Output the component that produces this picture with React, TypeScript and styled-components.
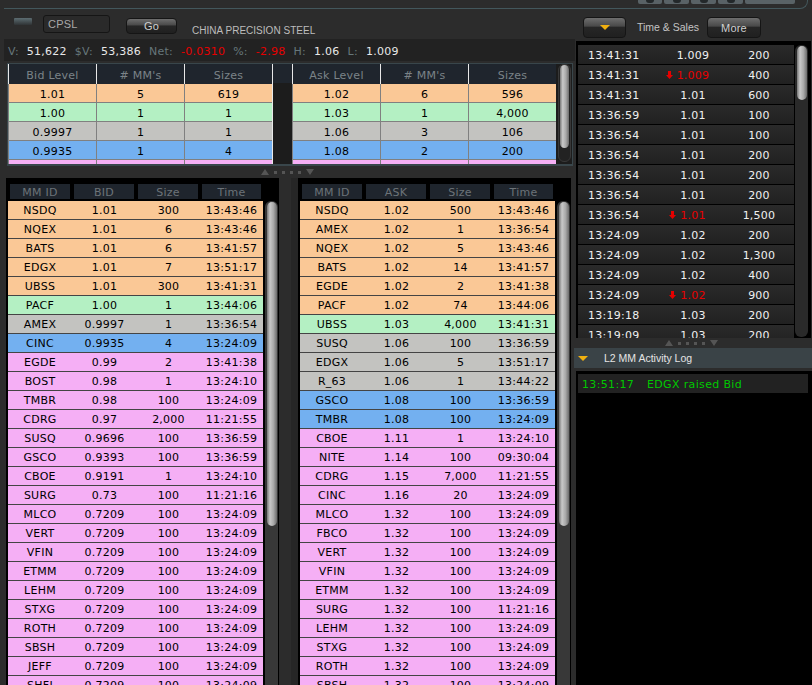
import React from "react";
import styled, { createGlobalStyle } from "styled-components";

const Global = createGlobalStyle`
  html, body { margin: 0; padding: 0; background: #2c2c2c; }
  #root { width: 812px; height: 685px; overflow: hidden; }
`;

type Tone = "o" | "g" | "s" | "b" | "p";
const tones: Record<Tone, string> = { o: "#fac896", g: "#b4f0c3", s: "#c3c3c0", b: "#73b0f0", p: "#f5aff5" };

const Page = styled.div`
  width: 812px; height: 685px; overflow: hidden; display: flex; flex-direction: column;
  background: #2c2c2c; font-family: "DejaVu Sans", sans-serif; font-size: 11px; letter-spacing: .25px;
`;
const TopStrip = styled.div`
  height: 8px; flex: none; margin: 0 4px; border-bottom: 1px solid #43575c; border-right: 1px solid #43575c;
  border-bottom-right-radius: 8px; display: flex; justify-content: flex-end; gap: 2px; padding-right: 12px; box-sizing: content-box;
`;
const TopTab = styled.div<{ $w: number }>`
  width: ${p => p.$w}px; height: 4px; background: #596266; border-radius: 0 0 2px 2px; display: flex; justify-content: center;
`;
const TopGlyph = styled.div`width: 8px; height: 3px; background: #23282a; border-radius: 0 0 3px 3px;`;
const Body = styled.div`flex: 1; min-height: 0; display: flex;`;
const LeftCol = styled.div`width: 575px; flex: none; display: flex; flex-direction: column; min-height: 0;`;
const RightCol = styled.div`flex: 1; min-width: 0; display: flex; flex-direction: column; min-height: 0;`;

const Header = styled.div`height: 30px; flex: none; display: flex; align-items: flex-start; padding: 6px 0 0 14px; box-sizing: border-box;`;
const BarButton = styled.div`width: 18px; height: 7px; margin-top: 3px; border-radius: 1px; background: linear-gradient(#5d6d72, #2f3335);`;
const SymbolBox = styled.div`
  width: 67px; height: 18px; margin-left: 11px; box-sizing: border-box; background: #2a2a2a; border: 1px solid #151515; border-radius: 3px;
  color: #a8a8a8; line-height: 16px; padding-left: 4px; font-family: "Liberation Sans", sans-serif;
`;
const Button = styled.div<{ $w: number }>`
  width: ${p => p.$w}px; box-sizing: border-box; border: 1px solid #151515; border-radius: 4px; display: flex; align-items: center; justify-content: center;
  background: linear-gradient(#6e6e6e 0%, #4a4a4a 42%, #262626 50%, #202020 100%); color: #cfcfcf;
  font-family: "Liberation Sans", sans-serif; letter-spacing: .2px;
`;
const GoButton = styled(Button)`height: 16px; margin: 3px 0 0 16px;`;
const Title = styled.div`margin: 9px 0 0 15px; color: #bdbdbd; font-family: "Liberation Sans", sans-serif; font-size: 10px; line-height: 14px; letter-spacing: .02px;`;

const Stats = styled.div`
  height: 22px; flex: none; margin-left: 4px; background: #222; display: flex; align-items: center; padding: 2px 0 0 4px; white-space: nowrap; box-sizing: border-box;
`;
const StatLabel = styled.span`color: #66777b; margin-right: 8px; margin-left: 8px; &:first-child { margin-left: 0; }`;
const StatValue = styled.span<{ $red?: boolean }>`color: ${p => (p.$red ? "#e60000" : "#e8e8e8")};`;

const LevelFrame = styled.div`
  height: 103px; flex: none; margin: 2px 2px 0 7px; box-sizing: border-box; border: 1px solid #39464b; border-bottom-width: 2px; display: flex; overflow: hidden;
  background: #1c1c1c;
`;
const LevelSide = styled.div<{ $last?: boolean }>`
  display: grid; grid-template-columns: repeat(3, 88px); grid-auto-rows: 19px; align-content: start; flex: none;
  border-right: ${p => (p.$last ? "none" : "1px solid transparent")};
`;
const LevelHead = styled.div`
  height: 20px; margin-bottom: -1px; background: #1f252d; color: #7b8388; border-left: 1px solid #e8e8e8; text-align: center; line-height: 23px; box-sizing: border-box;
`;
const LevelCell = styled.div<{ $tone: Tone }>`
  background: ${p => tones[p.$tone]}; color: #000; text-align: center; line-height: 21px; box-sizing: border-box; margin-top: 1px; height: 19px;
  border-left: 1px solid #808080; border-bottom: 1px solid #808080;
`;
const LevelGap = styled.div`width: 19px; flex: none; background: linear-gradient(#1f252d 19px, #1c1c1c 19px); border-left: 1px solid #e8e8e8; box-sizing: content-box; margin-left: -1px;`;

const Track = styled.div<{ $w?: number }>`
  width: ${p => p.$w ?? 13}px; flex: none; background: #383838; border-radius: 6px 6px 0 0; padding: 2px 1px 0 2px; box-sizing: border-box;
`;
const LevelTrack = styled(Track)`margin-left: 2px; border-radius: 6px; height: 98px; background: #222; border: 1px solid #383838; padding: 0 1px;`;
const Thumb = styled.div<{ $h: number }>`
  height: ${p => p.$h}px; border-radius: 5px;
  background: linear-gradient(90deg, #777 0%, #c9c9c9 30%, #a9a9a9 65%, #6c6c6c 100%);
`;

const Splitter = styled.div<{ $h: number; $ml: number }>`
  height: ${p => p.$h}px; flex: none; display: flex; align-items: center; gap: 5px; padding-left: ${p => p.$ml}px; box-sizing: border-box;
`;
const Tri = styled.div<{ $down?: boolean }>`
  width: 0; height: 0; border-left: 4px solid transparent; border-right: 4px solid transparent;
  ${p => (p.$down ? "border-top: 6px solid #555;" : "border-bottom: 6px solid #555;")}
`;
const Dot = styled.div`width: 3px; height: 3px; background: #555;`;

const Panels = styled.div`flex: 1; min-height: 0; display: flex; justify-content: space-between; padding: 0 4px 0 6px;`;
const Panel = styled.div`
  width: 273px; flex: none; background: #000; padding: 6px 0 0 2px; box-sizing: border-box; overflow: hidden; display: flex; flex-direction: column; border-right: 1px solid #000;
  & + & { box-shadow: -7px 0 0 #262626; }
`;
const HeadRow = styled.div`display: flex; gap: 4px; padding-left: 2px; flex: none; height: 17px;`;
const HeadCell = styled.div<{ $w: number }>`
  width: ${p => p.$w}px; height: 15px; background: #1f252d; color: #6c7378; text-align: center; line-height: 17px;
`;
const PanelBody = styled.div`display: flex; flex: 1; min-height: 0;`;
const Rows = styled.div`width: 255px; flex: none; display: flex; flex-direction: column;`;
const MMRow = styled.div<{ $tone: Tone }>`
  height: 19px; flex: none; box-sizing: border-box; border-bottom: 1px solid #444; background: ${p => tones[p.$tone]}; color: #000;
  display: grid; grid-template-columns: 64px 65px 63px 63px; line-height: 20px; text-align: center;
`;
const PanelTrack = styled(Track)`margin-left: 2px; width: 13px; padding-top: 1px;`;

const RightHeader = styled.div`height: 32px; flex: none; display: flex; align-items: flex-start; padding: 8px 0 0 8px; box-sizing: border-box;`;
const ArrowButton = styled(Button)`height: 21px;`;
const MoreButton = styled(Button)`height: 21px; margin-left: 11px;`;
const SmallCaption = styled.div`margin: 4px 0 0 11px; color: #c4c4c4; font-family: "Liberation Sans", sans-serif; font-size: 10.5px; line-height: 13px; width: 59px; white-space: nowrap; letter-spacing: 0;`;
const YellowTri = styled.div`
  width: 0; height: 0; border-left: 5px solid transparent; border-right: 5px solid transparent; border-top: 5px solid #f0b010;
`;
const TSPanel = styled.div`
  height: 297px; flex: none; margin: 0 1px; background: #000; display: flex; padding: 4px 0 0 2px; box-sizing: border-box; overflow: hidden;
`;
const TSRows = styled.div`width: 216px; flex: none; display: flex; flex-direction: column;`;
const TSRow = styled.div`
  height: 20px; flex: none; box-sizing: border-box; border-bottom: 1px solid #000; background: linear-gradient(#2a2a2a, #212121); color: #f0f0f0;
  display: grid; grid-template-columns: 80px 70px 62px; line-height: 21px;
`;
const TSTime = styled.div`padding-left: 10px;`;
const TSPrice = styled.div<{ $red?: boolean }>`text-align: center; color: ${p => (p.$red ? "#e60000" : "inherit")};`;
const PriceInner = styled.span`position: relative;`;
const DownMark = styled.svg`position: absolute; left: -11px; top: 2px;`;
const TSSize = styled.div`text-align: center;`;
const TSTrack = styled(Track)`margin-left: 1px; background: #2a2a2a; height: 292px; border-radius: 6px; padding: 1px 1px 0 2px;`;

const LogHead = styled.div`
  height: 20px; flex: none; margin-left: -1px; background: #3a4347; display: flex; align-items: center; padding-left: 4px; color: #e4e4e4;
  font-family: "Liberation Sans", sans-serif; font-size: 10.5px; letter-spacing: 0;
`;
const LogTitle = styled.span`margin-left: 16px;`;
const LogPanel = styled.div`flex: 1; min-height: 0; margin: 3px 0 0 1px; background: #000; padding: 3px 4px 0 2px;`;
const LogRow = styled.div`height: 19px; background: #222; color: #00c800; line-height: 21px; padding-left: 4px; display: flex; letter-spacing: .35px;`;
const LogTime = styled.span`width: 65px;`;

const levelBid: [string, string, string, Tone][] = [
  ["1.01", "5", "619", "o"], ["1.00", "1", "1", "g"], ["0.9997", "1", "1", "s"], ["0.9935", "1", "4", "b"], ["", "", "", "p"],
];
const levelAsk: [string, string, string, Tone][] = [
  ["1.02", "6", "596", "o"], ["1.03", "1", "4,000", "g"], ["1.06", "3", "106", "s"], ["1.08", "2", "200", "b"], ["", "", "", "p"],
];
type R = [string, string, string, string, Tone];
const bids: R[] = [
  ["NSDQ", "1.01", "300", "13:43:46", "o"], ["NQEX", "1.01", "6", "13:43:46", "o"], ["BATS", "1.01", "6", "13:41:57", "o"],
  ["EDGX", "1.01", "7", "13:51:17", "o"], ["UBSS", "1.01", "300", "13:41:31", "o"], ["PACF", "1.00", "1", "13:44:06", "g"],
  ["AMEX", "0.9997", "1", "13:36:54", "s"], ["CINC", "0.9935", "4", "13:24:09", "b"], ["EGDE", "0.99", "2", "13:41:38", "p"],
  ["BOST", "0.98", "1", "13:24:10", "p"], ["TMBR", "0.98", "100", "13:24:09", "p"], ["CDRG", "0.97", "2,000", "11:21:55", "p"],
  ["SUSQ", "0.9696", "100", "13:36:59", "p"], ["GSCO", "0.9393", "100", "13:36:59", "p"], ["CBOE", "0.9191", "1", "13:24:10", "p"],
  ["SURG", "0.73", "100", "11:21:16", "p"], ["MLCO", "0.7209", "100", "13:24:09", "p"], ["VERT", "0.7209", "100", "13:24:09", "p"],
  ["VFIN", "0.7209", "100", "13:24:09", "p"], ["ETMM", "0.7209", "100", "13:24:09", "p"], ["LEHM", "0.7209", "100", "13:24:09", "p"],
  ["STXG", "0.7209", "100", "13:24:09", "p"], ["ROTH", "0.7209", "100", "13:24:09", "p"], ["SBSH", "0.7209", "100", "13:24:09", "p"],
  ["JEFF", "0.7209", "100", "13:24:09", "p"], ["SHFI", "0.7209", "100", "13:24:09", "p"],
];
const asks: R[] = [
  ["NSDQ", "1.02", "500", "13:43:46", "o"], ["AMEX", "1.02", "1", "13:36:54", "o"], ["NQEX", "1.02", "5", "13:43:46", "o"],
  ["BATS", "1.02", "14", "13:41:57", "o"], ["EGDE", "1.02", "2", "13:41:38", "o"], ["PACF", "1.02", "74", "13:44:06", "o"],
  ["UBSS", "1.03", "4,000", "13:41:31", "g"], ["SUSQ", "1.06", "100", "13:36:59", "s"], ["EDGX", "1.06", "5", "13:51:17", "s"],
  ["R_63", "1.06", "1", "13:44:22", "s"], ["GSCO", "1.08", "100", "13:36:59", "b"], ["TMBR", "1.08", "100", "13:24:09", "b"],
  ["CBOE", "1.11", "1", "13:24:10", "p"], ["NITE", "1.14", "100", "09:30:04", "p"], ["CDRG", "1.15", "7,000", "11:21:55", "p"],
  ["CINC", "1.16", "20", "13:24:09", "p"], ["MLCO", "1.32", "100", "13:24:09", "p"], ["FBCO", "1.32", "100", "13:24:09", "p"],
  ["VERT", "1.32", "100", "13:24:09", "p"], ["VFIN", "1.32", "100", "13:24:09", "p"], ["ETMM", "1.32", "100", "13:24:09", "p"],
  ["SURG", "1.32", "100", "11:21:16", "p"], ["LEHM", "1.32", "100", "13:24:09", "p"], ["STXG", "1.32", "100", "13:24:09", "p"],
  ["ROTH", "1.32", "100", "13:24:09", "p"], ["SBSH", "1.32", "100", "13:24:09", "p"],
];
const sales: [string, string, string, boolean][] = [
  ["13:41:31", "1.009", "200", false], ["13:41:31", "1.009", "400", true], ["13:41:31", "1.01", "600", false],
  ["13:36:59", "1.01", "100", false], ["13:36:54", "1.01", "100", false], ["13:36:54", "1.01", "200", false],
  ["13:36:54", "1.01", "200", false], ["13:36:54", "1.01", "200", false], ["13:36:54", "1.01", "1,500", true],
  ["13:24:09", "1.02", "200", false], ["13:24:09", "1.02", "1,300", false], ["13:24:09", "1.02", "400", false],
  ["13:24:09", "1.02", "900", true], ["13:19:18", "1.03", "200", false], ["13:19:09", "1.03", "200", false],
];

const Handle = () => (
  <>
    <Tri /><Dot /><Dot /><Dot /><Dot /><Tri $down />
  </>
);

function Level({ title, rows, last }: { title: string; rows: [string, string, string, Tone][]; last?: boolean }) {
  return (
    <LevelSide $last={last}>
      {[title, "# MM's", "Sizes"].map(h => <LevelHead key={h}>{h}</LevelHead>)}
      {rows.map((r, i) => [0, 1, 2].map(c => <LevelCell key={`${i}-${c}`} $tone={r[3]}>{r[c as 0 | 1 | 2]}</LevelCell>))}
    </LevelSide>
  );
}

function MM({ second, rows }: { second: string; rows: R[] }) {
  return (
    <Panel>
      <HeadRow>
        <HeadCell $w={60}>MM ID</HeadCell>
        <HeadCell $w={60}>{second}</HeadCell>
        <HeadCell $w={60}>Size</HeadCell>
        <HeadCell $w={59}>Time</HeadCell>
      </HeadRow>
      <PanelBody>
        <Rows>
          {rows.map((r, i) => (
            <MMRow key={i} $tone={r[4]}>
              <div>{r[0]}</div><div>{r[1]}</div><div>{r[2]}</div><div>{r[3]}</div>
            </MMRow>
          ))}
        </Rows>
        <PanelTrack><Thumb $h={324} /></PanelTrack>
      </PanelBody>
    </Panel>
  );
}

export default function App() {
  return (
    <Page>
      <Global />
      <TopStrip>
        <TopTab $w={24}><TopGlyph /></TopTab>
        <TopTab $w={25}><TopGlyph /></TopTab>
        <TopTab $w={25}><TopGlyph /></TopTab>
        <TopTab $w={25}><TopGlyph /></TopTab>
        <TopTab $w={50} />
      </TopStrip>
      <Body>
        <LeftCol>
          <Header>
            <BarButton />
            <SymbolBox>CPSL</SymbolBox>
            <GoButton $w={51}>Go</GoButton>
            <Title>CHINA PRECISION STEEL</Title>
          </Header>
          <Stats>
            <StatLabel>V:</StatLabel><StatValue>51,622</StatValue>
            <StatLabel>$V:</StatLabel><StatValue>53,386</StatValue>
            <StatLabel>Net:</StatLabel><StatValue $red>-0.0310</StatValue>
            <StatLabel>%:</StatLabel><StatValue $red>-2.98</StatValue>
            <StatLabel>H:</StatLabel><StatValue>1.06</StatValue>
            <StatLabel>L:</StatLabel><StatValue>1.009</StatValue>
          </Stats>
          <LevelFrame>
            <Level title="Bid Level" rows={levelBid} />
            <LevelGap />
            <Level title="Ask Level" rows={levelAsk} last />
            <LevelTrack><Thumb $h={83} /></LevelTrack>
          </LevelFrame>
          <Splitter $h={12} $ml={261}><Handle /></Splitter>
          <Panels>
            <MM second="BID" rows={bids} />
            <MM second="ASK" rows={asks} />
          </Panels>
        </LeftCol>
        <RightCol>
          <RightHeader>
            <ArrowButton $w={43}><YellowTri /></ArrowButton>
            <SmallCaption>Time &amp; Sales</SmallCaption>
            <MoreButton $w={54}>More</MoreButton>
          </RightHeader>
          <TSPanel>
            <TSRows>
              {sales.map((s, i) => (
                <TSRow key={i}>
                  <TSTime>{s[0]}</TSTime>
                  <TSPrice $red={s[3]}>
                    <PriceInner>
                      {s[3] && (
                        <DownMark width="7" height="8" viewBox="0 0 7 8">
                          <path d="M2 0h3v4h2L3.5 8 0 4h2z" fill="#e60000" />
                        </DownMark>
                      )}
                      {s[1]}
                    </PriceInner>
                  </TSPrice>
                  <TSSize>{s[2]}</TSSize>
                </TSRow>
              ))}
            </TSRows>
            <TSTrack><Thumb $h={54} /></TSTrack>
          </TSPanel>
          <Splitter $h={10} $ml={90}><Handle /></Splitter>
          <LogHead><YellowTri /><LogTitle>L2 MM Activity Log</LogTitle></LogHead>
          <LogPanel>
            <LogRow><LogTime>13:51:17</LogTime><span>EDGX raised Bid</span></LogRow>
          </LogPanel>
        </RightCol>
      </Body>
    </Page>
  );
}
